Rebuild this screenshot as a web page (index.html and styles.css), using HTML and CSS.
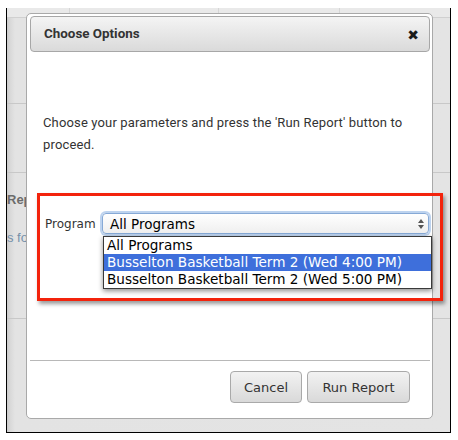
FILE: index.html
```html
<!DOCTYPE html>
<html>
<head>
<meta charset="utf-8">
<link rel="stylesheet" href="styles.css">
</head>
<body>
<div class="frame">
  <div class="page">
    <div class="page-top">
      <span class="col c1"></span><span class="col c2"></span><span class="col c3"></span>
    </div>
    <div class="page-band band1"></div>
    <div class="page-band band2"></div>
    <div class="page-section">
      <div class="page-heading">Reports</div>
      <div class="page-link">s for</div>
    </div>
  </div>

  <div class="modal">
    <div class="modal-header">
      <span class="modal-title">Choose Options</span>
      <span class="modal-close">&#x2716;</span>
    </div>
    <div class="modal-body">
      <p class="intro">Choose your parameters and press the 'Run Report' button to proceed.</p>
      <div class="field">
        <span class="field-label">Program</span>
        <div class="select">
          <span class="select-value">All Programs</span>
          <span class="select-arrows"><span class="arrow-up"></span><span class="arrow-down"></span></span>
          <ul class="dropdown">
            <li class="option">All Programs</li>
            <li class="option selected">Busselton Basketball Term 2 (Wed 4:00 PM)</li>
            <li class="option">Busselton Basketball Term 2 (Wed 5:00 PM)</li>
          </ul>
        </div>
      </div>
    </div>
    <div class="modal-footer">
      <button class="btn btn-cancel">Cancel</button>
      <button class="btn btn-run">Run Report</button>
    </div>
  </div>

  <div class="annotation"></div>
</div>
</body>
</html>
```
FILE: styles.css
```css
* { box-sizing: border-box; }

html, body {
  margin: 0;
  padding: 0;
  background: #ffffff;
}

body {
  padding: 8px 0 0 6px;
  font-family: "Roboto", "Liberation Sans", sans-serif;
}

.frame {
  position: relative;
  width: 445px;
  height: 425px;
  border-left: 1px solid #000;
  border-right: 1px solid #000;
  border-bottom: 1px solid #000;
  overflow: hidden;
  background: linear-gradient(to right, #cbcbcb 0, #d8d8d8 3px, #e3e3e3 8px, #e4e4e4 100%);
}

/* page behind overlay */
.page {
  display: flex;
  flex-direction: column;
}

.page-top {
  height: 10px;
  border-bottom: 1px solid #d0d0d0;
  background: #e9e9e9;
  display: flex;
}
.page-top .col {
  border-right: 1px solid #d6d6d6;
  height: 100%;
}
.page-top .c1 { width: 63px; }
.page-top .c2 { width: 149px; }
.page-top .c3 { width: 121px; }

.page-band { border-bottom: 1px solid #c8c8c8; }
.band1 { height: 86px; }
.band2 { height: 69px; }

.page-section {
  height: 146px;
  border-bottom: 1px solid #c8c8c8;
  padding: 20px 0 0 0;
}
.page-heading {
  font-family: "Liberation Sans", sans-serif;
  font-weight: bold;
  font-size: 13px;
  color: #6c6c6c;
  line-height: 14px;
}
.page-link {
  font-family: "Liberation Sans", sans-serif;
  font-size: 13px;
  color: #7590aa;
  margin-top: 24px;
  line-height: 14px;
}

/* modal */
.modal {
  position: absolute;
  left: 19px;
  top: 5px;
  width: 407px;
  height: 406px;
  border: 1px solid #a9a9a9;
  border-radius: 5px;
  background: #fff;
  padding: 2px 2px 0 3px;
  display: flex;
  flex-direction: column;
}

.modal-header {
  height: 36px;
  border: 1px solid #a7a7a7;
  border-radius: 4px;
  background: linear-gradient(#f4f4f4, #dadada);
  display: flex;
  align-items: center;
  justify-content: space-between;
  padding: 0 10px 2px 13px;
}
.modal-title {
  font-weight: bold;
  font-size: 13.4px;
  color: #333;
}
.modal-close {
  font-size: 14px;
  font-weight: bold;
  color: #1a1a1a;
  font-family: "DejaVu Sans", sans-serif;
  padding-top: 4px;
}

.modal-body {
  flex: 1;
  padding: 60px 0 0 13px;
}
.intro {
  margin: 0;
  width: 385px;
  font-size: 13px;
  line-height: 22px;
  color: #333;
  letter-spacing: 0.15px;
}

.field {
  display: flex;
  align-items: center;
  margin-top: 57px;
  margin-left: 2px;
}
.field-label {
  font-family: "DejaVu Sans", sans-serif;
  font-size: 12px;
  color: #333;
  width: 57px;
}
.select {
  position: relative;
  width: 327px;
  height: 21px;
  border: 1px solid #86a9d6;
  border-radius: 4px;
  box-shadow: 0 0 0 2px rgba(135, 175, 225, 0.55);
  background: linear-gradient(#ffffff, #efefef);
  display: flex;
  align-items: center;
  justify-content: space-between;
  padding: 0 4px 0 7px;
}
.select-value {
  font-family: "DejaVu Sans", sans-serif;
  font-size: 13.5px;
  color: #000;
}
.select-arrows {
  display: flex;
  flex-direction: column;
  gap: 2px;
}
.arrow-up, .arrow-down {
  width: 0;
  height: 0;
  border-left: 3px solid transparent;
  border-right: 3px solid transparent;
}
.arrow-up { border-bottom: 4px solid #555; }
.arrow-down { border-top: 4px solid #555; }

.dropdown {
  position: absolute;
  top: 22px;
  left: 0px;
  width: 329px;
  margin: 0;
  padding: 0;
  list-style: none;
  background: #fff;
  border: 1px solid #3a3a3a;
  box-shadow: 0 2px 5px rgba(0, 0, 0, 0.45);
}
.option {
  height: 17px;
  line-height: 17px;
  padding-left: 3px;
  font-family: "DejaVu Sans", sans-serif;
  font-size: 13.6px;
  color: #000;
  white-space: nowrap;
}
.option.selected {
  background: #3e6fdb;
  color: #fff;
}

.modal-footer {
  border-top: 1px solid #b8b8b8;
  padding: 10px 20px 15px 0;
  display: flex;
  justify-content: flex-end;
  gap: 5px;
}
.btn {
  height: 32px;
  border: 1px solid #a9a9a9;
  border-radius: 4px;
  background: linear-gradient(#f2f2f2, #d9d9d9);
  font-family: "DejaVu Sans", sans-serif;
  font-size: 13px;
  color: #333;
  padding: 0;
}
.btn-cancel { width: 72px; }
.btn-run { width: 103px; }

/* red annotation frame */
.annotation {
  position: absolute;
  left: 30px;
  top: 185px;
  width: 406px;
  height: 108px;
  border: 3px solid #f3230c;
  box-shadow: 2px 3px 4px rgba(0, 0, 0, 0.4);
}
```
